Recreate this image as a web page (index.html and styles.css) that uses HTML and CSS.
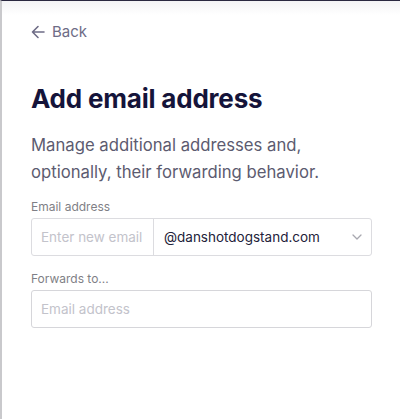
FILE: index.html
```html
<!DOCTYPE html>
<html lang="en">
<head>
  <meta charset="UTF-8">
  <meta name="viewport" content="width=device-width, initial-scale=1.0">
  <title>Add email address</title>
  <link rel="stylesheet" href="styles.css">
</head>
<body>
  <div class="panel">
    <a class="back-link" href="#">
      <svg class="back-icon" width="14" height="14" viewBox="0 0 14 14" fill="none">
        <path d="M13 7H1.5M7 1.5L1.5 7L7 12.5" stroke="currentColor" stroke-width="1.6" stroke-linecap="round" stroke-linejoin="round"/>
      </svg>
      Back
    </a>

    <h1 class="title">Add email address</h1>
    <p class="intro">Manage additional addresses and, optionally, their forwarding behavior.</p>

    <div class="field">
      <label class="field-label">Email address</label>
      <div class="input-group">
        <input class="input input-name" type="text" placeholder="Enter new email">
        <div class="select">
          <span>@danshotdogstand.com</span>
          <svg class="chevron" width="10" height="6" viewBox="0 0 10 6" fill="none">
            <path d="M1 1L5 5L9 1" stroke="currentColor" stroke-width="1.3" stroke-linecap="round" stroke-linejoin="round"/>
          </svg>
        </div>
      </div>
    </div>

    <div class="field">
      <label class="field-label">Forwards to...</label>
      <input class="input input-full" type="text" placeholder="Email address">
    </div>
  </div>
</body>
</html>
```

FILE: styles.css
```css
body {
  margin: 0;
  font-family: "Inter", "Noto Sans", sans-serif;
  background-color: #ffffff;
  height: 100vh;
  border-top: 1px solid #2a2840;
  border-left: 2px solid #c9c9cc;
  box-sizing: border-box;
}

.panel {
  padding: 19px 28px 0 29px;
  background: linear-gradient(#f3f3f5, #ffffff 14px);
}

.back-link {
  display: inline-flex;
  align-items: center;
  gap: 7px;
  color: #6e6c86;
  text-decoration: none;
  font-size: 15px;
  line-height: 24px;
}

.back-icon {
  margin-top: -1px;
}

.title {
  margin: 39px 0 0;
  font-size: 26px;
  font-weight: 700;
  line-height: 32px;
  color: #15143a;
  letter-spacing: -0.2px;
}

.intro {
  margin: 17px 0 0;
  font-size: 16.7px;
  line-height: 27px;
  color: #5c5b70;
}

.field {
  margin-top: 13px;
}

.field + .field {
  margin-top: 15px;
}

.field-label {
  display: block;
  font-size: 12px;
  line-height: 16px;
  color: #7f7f86;
  margin-bottom: 3px;
}

.input-group {
  display: flex;
  height: 38px;
  border: 1px solid #dcdce0;
  border-radius: 3px;
  box-sizing: border-box;
}

.input {
  font-family: inherit;
  font-size: 13.5px;
  color: #222;
  border: none;
  outline: none;
  padding: 0 6px 0 9px;
  background: transparent;
}

.input::placeholder {
  color: #c3c3cb;
}

.input-name {
  width: 122px;
  box-sizing: border-box;
  border-right: 1px solid #dcdce0;
}

.select {
  flex: 1;
  display: flex;
  align-items: center;
  justify-content: space-between;
  padding: 0 9px 0 10px;
  font-size: 13.5px;
  color: #23223a;
}

.chevron {
  color: #a8a8b0;
}

.input-full {
  display: block;
  width: 100%;
  height: 38px;
  box-sizing: border-box;
  border: 1px solid #d6d6da;
  border-radius: 3px;
}
```
